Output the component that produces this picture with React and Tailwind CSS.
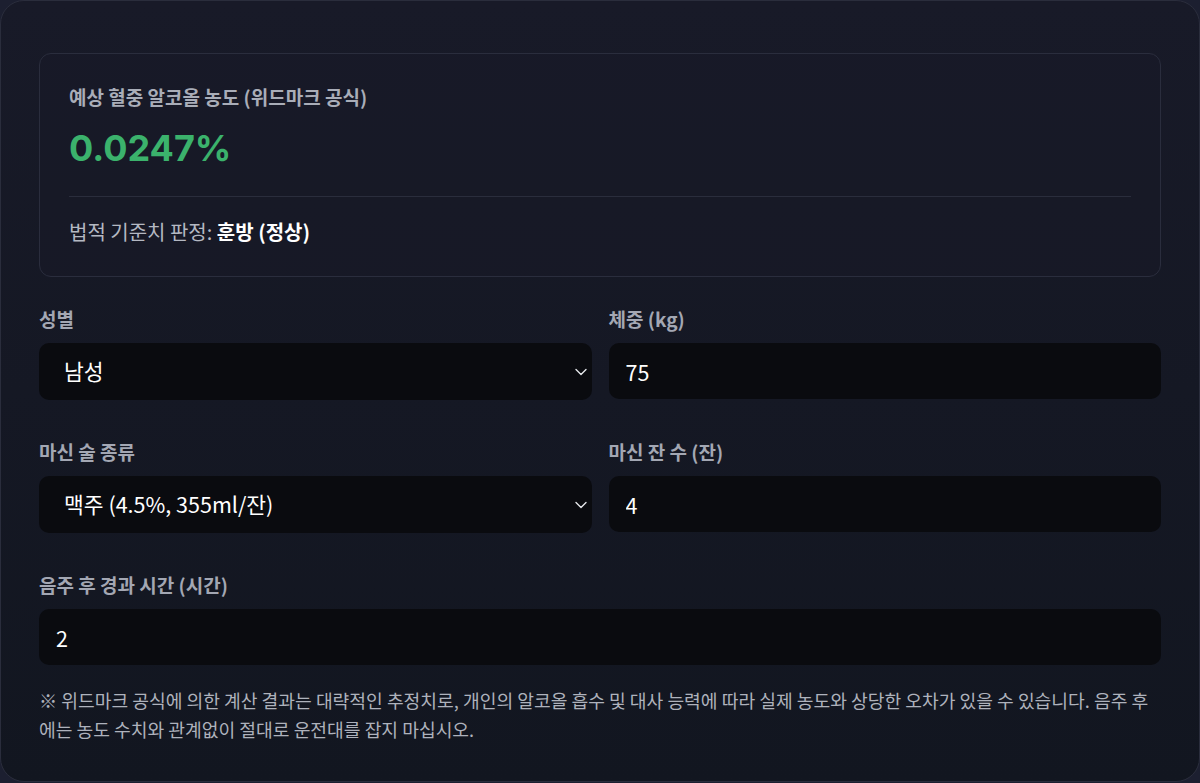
import React from "react";

function Chevron() {
  return (
    <svg
      className="pointer-events-none absolute right-[5px] top-1/2 -translate-y-1/2"
      width="12"
      height="8"
      viewBox="0 0 12 8"
      fill="none"
    >
      <path d="M1 1.5L6 6.5L11 1.5" stroke="#e5e7eb" strokeWidth="1.4" strokeLinecap="round" strokeLinejoin="round" />
    </svg>
  );
}

function SelectField({ label, value, options }) {
  return (
    <div className="flex flex-col">
      <label className="mb-3 text-[19px] leading-6 font-semibold text-[#a3a7b3]">{label}</label>
      <div className="relative">
        <select
          defaultValue={value}
          className="h-[57px] w-full appearance-none rounded-[10px] bg-[#0a0b0f] pl-[25px] pr-8 text-[21.5px] text-white outline-none"
          style={{ fontFamily: "'Noto Sans CJK KR', 'Inter', sans-serif" }}
        >
          {options.map((o) => (
            <option key={o}>{o}</option>
          ))}
        </select>
        <Chevron />
      </div>
    </div>
  );
}

function InputField({ label, value }) {
  return (
    <div className="flex flex-col">
      <label className="mb-3 text-[19px] leading-6 font-semibold text-[#a3a7b3]">{label}</label>
      <input
        defaultValue={value}
        className="h-[56px] w-full rounded-[10px] bg-[#0a0b0f] px-[17px] text-[21.5px] text-white outline-none"
        style={{ fontFamily: "'Noto Sans CJK KR', 'Inter', sans-serif" }}
      />
    </div>
  );
}

export default function App() {
  return (
    <div
      className="min-h-screen bg-[#1c1f30]"
      style={{ fontFamily: "'Noto Sans CJK KR', 'Inter', sans-serif" }}
    >
      <div className="h-[782px] rounded-[24px] border border-[#2a2d3c] bg-gradient-to-b from-[#181a28] to-[#121620] px-[38px] pt-[52px]">
        <div className="rounded-[12px] border border-[#2a2d3d] bg-[#181a28]/40 px-[29px] pt-[30px] pb-[30px]">
          <div className="text-[19px] leading-[26px] font-semibold text-[#a9adb8]">
            예상 혈중 알코올 농도 (위드마크 공식)
          </div>
          <div
            className="mt-[18px] text-[36px] leading-10 font-bold text-[#3bb26c]"
            style={{ fontFamily: "'Inter', sans-serif" }}
          >
            0.0247%
          </div>
          <div className="mt-7 h-px bg-[#2a2d3c]" />
          <div className="mt-[21px] text-[20px] leading-7 text-[#b4b8c2]">
            법적 기준치 판정: <span className="font-bold text-white">훈방 (정상)</span>
          </div>
        </div>

        <div className="mt-[30px] grid grid-cols-2 gap-x-[17px] gap-y-[40px]">
          <SelectField label="성별" value="남성" options={["남성", "여성"]} />
          <InputField label="체중 (kg)" value="75" />
          <SelectField
            label="마신 술 종류"
            value="맥주 (4.5%, 355ml/잔)"
            options={["맥주 (4.5%, 355ml/잔)", "소주 (17%, 50ml/잔)", "와인 (12%, 150ml/잔)"]}
          />
          <InputField label="마신 잔 수 (잔)" value="4" />
          <div className="col-span-2">
            <InputField label="음주 후 경과 시간 (시간)" value="2" />
          </div>
        </div>

        <p className="mt-[21px] text-[18.2px] leading-[29px] text-[#aeb2bc]">
          ※ 위드마크 공식에 의한 계산 결과는 대략적인 추정치로, 개인의 알코올 흡수 및 대사 능력에 따라 실제 농도와 상당한 오차가 있을 수 있습니다. 음주 후에는 농도 수치와 관계없이 절대로 운전대를 잡지 마십시오.
        </p>
      </div>
    </div>
  );
}
